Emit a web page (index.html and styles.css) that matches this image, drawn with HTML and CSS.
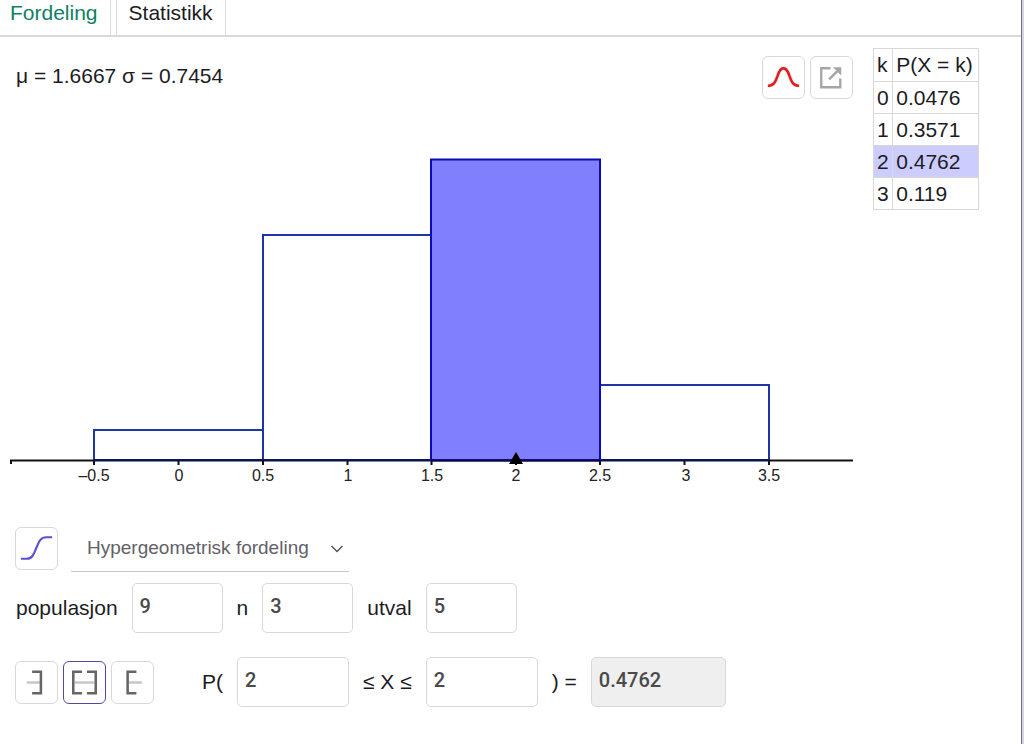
FILE: index.html
```html
<!DOCTYPE html>
<html lang="nn">
<head>
<meta charset="utf-8">
<meta name="viewport" content="width=device-width, initial-scale=1">
<title>Sannsynsrekning</title>
<link rel="stylesheet" href="styles.css">
</head>
<body>
<div class="app">
  <nav class="tabs" role="tablist">
    <button class="tab tab-active" type="button" role="tab" aria-selected="true">Fordeling</button>
    <button class="tab" type="button" role="tab" aria-selected="false">Statistikk</button>
  </nav>

  <main class="content">
    <section class="plot">
      <header class="plot-head">
        <p class="stats">μ = 1.6667 σ = 0.7454</p>
        <div class="tools">
          <button class="icon-btn" type="button" aria-label="Normalkurve">
            <svg viewBox="0 0 42 42" aria-hidden="true"><path d="M5 29.500C11 29.500 12.500 26 15 19C16.800 13.500 18.500 11.500 21 11.500C23.500 11.500 25.200 13.500 27 19C29.500 26 31 29.500 37 29.500" fill="none" stroke="#fbc0b8" stroke-width="3.600"/><path d="M5 29.500C11 29.500 12.500 26 15 19C16.800 13.500 18.500 11.500 21 11.500C23.500 11.500 25.200 13.500 27 19C29.500 26 31 29.500 37 29.500" fill="none" stroke="#e01822" stroke-width="2.400"/></svg>
          </button>
          <button class="icon-btn" type="button" aria-label="Eksporter">
            <svg viewBox="0 0 42 42" aria-hidden="true"><path d="M20 11.500H10.500V31H30V22" fill="none" stroke="#a6a6a6" stroke-width="2.400"/><path d="M18.500 23L27 14.500" stroke="#a6a6a6" stroke-width="2.600"/><path d="M22.500 10.500H31V19Z" fill="#a6a6a6"/></svg>
          </button>
        </div>
      </header>
      <svg class="chart" viewBox="10 99 843 391" role="img" aria-label="Histogram">
        <g fill="none" stroke="#1d35a8" stroke-width="2">
          <path d="M94 460V430H263V460"/>
          <path d="M263 460V235H431"/>
          <path d="M600 385H769V460"/>
        </g>
        <path class="axis" d="M11 464V460.500H853M94 460V465M178.500 460V465M263 460V465M347.500 460V465M431.500 460V465M516 460V465M600 460V465M684.500 460V465M769 460V465"/>
        <path d="M94 460H769" stroke="#0a1458" stroke-width="2"/>
        <rect x="431" y="159.500" width="169" height="300.500" fill="#8080ff" stroke="#0a0ab8" stroke-width="2"/>
        <path d="M431 460.500H600" stroke="#0a0a50" stroke-width="2"/>
        <path d="M509 464L516 452L523 464Z" fill="#000"/>
        <g class="ticks">
          <text x="94" y="481">–0.5</text>
          <text x="179" y="481">0</text>
          <text x="263" y="481">0.5</text>
          <text x="348" y="481">1</text>
          <text x="432" y="481">1.5</text>
          <text x="516" y="481">2</text>
          <text x="600" y="481">2.5</text>
          <text x="686" y="481">3</text>
          <text x="769" y="481">3.5</text>
        </g>
      </svg>
    </section>

    <table class="prob">
      <thead><tr><th scope="col">k</th><th scope="col">P(X = k)</th></tr></thead>
      <tbody>
        <tr><td>0</td><td>0.0476</td></tr>
        <tr><td>1</td><td>0.3571</td></tr>
        <tr class="selected"><td>2</td><td>0.4762</td></tr>
        <tr><td>3</td><td>0.119</td></tr>
      </tbody>
    </table>
  </main>

  <form class="controls">
    <div class="row row-dist">
      <button class="icon-btn" type="button" aria-label="Kumulativ">
        <svg viewBox="0 0 42 42" aria-hidden="true"><path d="M5 31.500H11C17 31.500 18.500 26 21 20C23.500 14 25 9.500 31 9.500H37" fill="none" stroke="#5a50d2" stroke-width="2.200"/></svg>
      </button>
      <div class="dist">
        <select class="dist-select" aria-label="Fordeling"><option>Hypergeometrisk fordeling</option></select>
        <svg class="chevron" viewBox="0 0 14 10" aria-hidden="true"><path d="M1.500 2L7 7.500L12.500 2" fill="none" stroke="#555" stroke-width="1.500"/></svg>
      </div>
    </div>

    <div class="row row-params">
      <label for="pop">populasjon</label><input class="field" id="pop" type="text" value="9">
      <label for="n">n</label><input class="field" id="n" type="text" value="3">
      <label for="utval">utval</label><input class="field" id="utval" type="text" value="5">
    </div>

    <div class="row row-interval">
      <div class="modes">
        <button class="icon-btn" type="button" aria-label="Venstresidig">
          <svg viewBox="0 0 42 42" aria-hidden="true"><path d="M11 21H25" stroke="#c4c4c4" stroke-width="2.400"/><path d="M16.500 10H25.500V32H16.500" fill="none" stroke="#666" stroke-width="2.600"/></svg>
        </button>
        <button class="icon-btn icon-btn-on" type="button" aria-label="Intervall" aria-pressed="true">
          <svg viewBox="0 0 42 42" aria-hidden="true"><path d="M11 21H31" stroke="#c4c4c4" stroke-width="2.400"/><path d="M18.500 10H9.500V32H18.500M23.500 10H32.500V32H23.500" fill="none" stroke="#666" stroke-width="2.600"/></svg>
        </button>
        <button class="icon-btn" type="button" aria-label="Høgresidig">
          <svg viewBox="0 0 42 42" aria-hidden="true"><path d="M17 21H30.500" stroke="#c4c4c4" stroke-width="2.400"/><path d="M25 10H16V32H25" fill="none" stroke="#666" stroke-width="2.600"/></svg>
        </button>
      </div>
      <label for="low">P(</label><input class="field field-wide" id="low" type="text" value="2">
      <label for="high">≤ X ≤</label><input class="field field-wide" id="high" type="text" value="2">
      <label for="result">) =</label><input class="field field-result" id="result" type="text" value="0.4762" readonly>
    </div>
  </form>
</div>
</body>
</html>
```
FILE: styles.css
```css
* {
  box-sizing: border-box;
}

body {
  margin: 0;
  padding-right: 2px;
  background: #d4d6dc;
  color: #1c1c1f;
  font: 21px/24px "Liberation Sans", Arial, sans-serif;
}

button,
input,
select {
  font: inherit;
  color: inherit;
}

.app {
  min-height: 100vh;
  background: #fff;
  border-right: 1px solid #70707a;
}

.tabs {
  display: flex;
  gap: 5px;
  height: 37px;
  border-bottom: 2px solid #d9d9d9;
}

.tab {
  height: 35px;
  padding: 0 12px 10px;
  border: 1px solid #dcdcdc;
  border-width: 0 1px;
  background: #fff;
}

.tab-active {
  padding-left: 10px;
  border-left: 0;
  color: #0f7f66;
}

.content {
  display: grid;
  grid-template-columns: minmax(0, 1fr) auto;
  align-items: start;
  gap: 20px;
  padding: 11px 42px 0 10px;
}

.plot-head {
  display: flex;
  justify-content: space-between;
  padding-top: 8px;
}

.stats {
  margin: 0;
  padding: 8px 0 0 6px;
}

.tools,
.modes {
  display: flex;
  gap: 5px;
}

.icon-btn {
  flex: none;
  width: 43px;
  height: 43px;
  padding: 0;
  border: 1px solid #d8d8dc;
  border-radius: 6px;
  background: #fff;
}

.icon-btn svg {
  display: block;
  width: 100%;
}

.icon-btn-on {
  border-color: #5148a8;
}

.chart {
  display: block;
  width: 100%;
}

.axis {
  fill: none;
  stroke: #111;
  stroke-width: 2;
}

.ticks {
  fill: #222;
  font-size: 16px;
  text-anchor: middle;
}

.prob {
  width: 106px;
  border-collapse: collapse;
}

.prob th,
.prob td {
  height: 32px;
  padding: 0 3px;
  border: 1px solid #d8d8d8;
  font-weight: 400;
  text-align: left;
}

.prob th {
  height: 33px;
}

.prob .selected td {
  background: #ccccff;
}

.controls {
  padding: 37px 16px 38px 15px;
}

.row {
  display: flex;
  align-items: center;
}

.row-dist {
  align-items: flex-start;
  gap: 13px;
}

.dist {
  position: relative;
  width: 278px;
}

.dist-select {
  width: 100%;
  height: 45px;
  padding: 0 32px 2px 16px;
  border: 0;
  border-bottom: 1px solid #c0c6cc;
  appearance: none;
  background: transparent;
  color: #616166;
  font-size: 19px;
}

.chevron {
  position: absolute;
  top: 17px;
  right: 5px;
  width: 14px;
  height: 10px;
  pointer-events: none;
}

.row-params {
  gap: 14px;
  margin-top: 11px;
  padding-left: 1px;
}

.row-interval {
  gap: 14px;
  margin-top: 24px;
}

.modes {
  margin-right: 34px;
}

.field {
  width: 91px;
  height: 50px;
  padding: 0 7px 4px;
  border: 1px solid #d8d8dc;
  border-radius: 5px;
  background: #fff;
  color: #4a4a4a;
  font-family: Roboto, "Noto Sans", sans-serif;
  font-size: 20px;
  font-weight: 500;
}

.field-wide {
  width: 112px;
}

.field-result {
  width: 135px;
  background: #efefef;
}
```
